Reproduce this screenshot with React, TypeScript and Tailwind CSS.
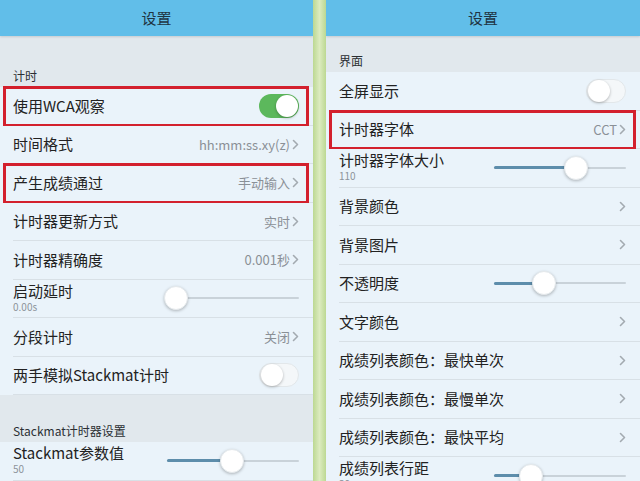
import React from 'react';

const FONT = { fontFamily: '"Noto Sans CJK SC", "Noto Sans", sans-serif' };

type RowProps = {
  label: string;
  value?: string;
  chevron?: boolean;
  toggle?: 'on' | 'off';
  slider?: number;
  sub?: string;
  highlight?: boolean;
};

function Chevron() {
  return (
    <svg width="7" height="11" viewBox="0 0 7 11" className="ml-[2px] shrink-0">
      <path d="M1.5 1.5 L5.5 5.5 L1.5 9.5" fill="none" stroke="#a3aab0" strokeWidth="1.6" strokeLinecap="round" strokeLinejoin="round" />
    </svg>
  );
}

function Toggle({ on }: { on: boolean }) {
  return on ? (
    <div className="w-[40px] h-[24px] rounded-full bg-[#5cb85c] flex items-center justify-end p-[1px]">
      <div className="w-[22px] h-[22px] rounded-full bg-white shadow-[0_1px_3px_rgba(0,0,0,0.3)]" />
    </div>
  ) : (
    <div className="w-[40px] h-[24px] rounded-full bg-[#f4f7f9] border border-[#e2e7ea] flex items-center p-[1px]">
      <div className="w-[22px] h-[22px] rounded-full bg-white shadow-[0_1px_3px_rgba(0,0,0,0.28)]" />
    </div>
  );
}

function Slider({ pos }: { pos: number }) {
  return (
    <div className="relative w-[132px] h-[24px] flex items-center">
      <div className="w-full h-[2px] bg-[#c9d2d9] rounded-full" />
      <div className="absolute left-0 h-[3px] bg-[#5d8dab] rounded-full" style={{ width: `${pos}px` }} />
      <div
        className="absolute w-[24px] h-[24px] rounded-full bg-white shadow-[0_1px_3px_rgba(0,0,0,0.25)] border border-[#e4e9ec]"
        style={{ left: `${pos - 12}px` }}
      />
    </div>
  );
}

function Row({ label, value, chevron, toggle, slider, sub, highlight }: RowProps) {
  return (
    <div className="relative h-[38.5px] shrink-0 bg-[#eaf3fa] flex flex-col">
      <div className="flex-1 flex items-center pl-[13px] pr-[14px]">
        {sub !== undefined ? (
          <div className="flex flex-col -mt-[3px]">
            <span className="text-[15px] text-[#222] leading-[17px]">{label}</span>
            <span className="text-[10px] text-[#8d949a] leading-[11px] mt-[2px]">{sub}</span>
          </div>
        ) : (
          <span className="text-[15px] text-[#222]">{label}</span>
        )}
        <div className="flex-1" />
        {value !== undefined && <span className="text-[13px] text-[#8a9096]">{value}</span>}
        {chevron && <Chevron />}
        {toggle && <Toggle on={toggle === 'on'} />}
        {slider !== undefined && <Slider pos={slider} />}
      </div>
      <div className="h-px bg-[#d8e0e6] ml-[13px]" />
      {highlight && (
        <div className="absolute left-[3px] right-[4px] top-[-1px] bottom-[-1px] border-[3px] border-[#d3202d] pointer-events-none" />
      )}
    </div>
  );
}

function Header() {
  return (
    <div className="h-[36px] shrink-0 bg-[#61bee9] flex items-center justify-center shadow-[0_1px_2px_rgba(0,0,0,0.12)] relative z-10">
      <span className="text-[15px] text-[#1f3442]">设置</span>
    </div>
  );
}

function Section({ label, height }: { label: string; height: string }) {
  return (
    <div className={`${height} shrink-0 bg-[#e1e8ed] flex items-end pl-[13px] pb-[2px]`}>
      <span className="text-[12px] text-[#2b2f33]">{label}</span>
    </div>
  );
}

export default function App() {
  return (
    <div className="w-[640px] h-[481px] overflow-hidden flex bg-[#eaf3fa]" style={FONT}>
      {/* left screen */}
      <div className="w-[313px] shrink-0 flex flex-col overflow-hidden">
        <Header />
        <Section label="计时" height="h-[51px]" />
        <Row label="使用WCA观察" toggle="on" highlight />
        <Row label="时间格式" value="hh:mm:ss.xy(z)" chevron />
        <Row label="产生成绩通过" value="手动输入" chevron highlight />
        <Row label="计时器更新方式" value="实时" chevron />
        <Row label="计时器精确度" value="0.001秒" chevron />
        <Row label="启动延时" sub="0.00s" slider={9} />
        <Row label="分段计时" value="关闭" chevron />
        <Row label="两手模拟Stackmat计时" toggle="off" />
        <Section label="Stackmat计时器设置" height="h-[47px]" />
        <Row label="Stackmat参数值" sub="50" slider={65} />
      </div>

      {/* divider */}
      <div className="w-[13px] shrink-0 bg-gradient-to-r from-[#bcd892] via-[#dcebbf] to-[#bcd892]" />

      {/* right screen */}
      <div className="flex-1 flex flex-col overflow-hidden">
        <Header />
        <Section label="界面" height="h-[36px]" />
        <Row label="全屏显示" toggle="off" />
        <Row label="计时器字体" value="CCT" chevron highlight />
        <Row label="计时器字体大小" sub="110" slider={82} />
        <Row label="背景颜色" chevron />
        <Row label="背景图片" chevron />
        <Row label="不透明度" slider={50} />
        <Row label="文字颜色" chevron />
        <Row label="成绩列表颜色：最快单次" chevron />
        <Row label="成绩列表颜色：最慢单次" chevron />
        <Row label="成绩列表颜色：最快平均" chevron />
        <Row label="成绩列表行距" sub="30" slider={37} />
      </div>
    </div>
  );
}
